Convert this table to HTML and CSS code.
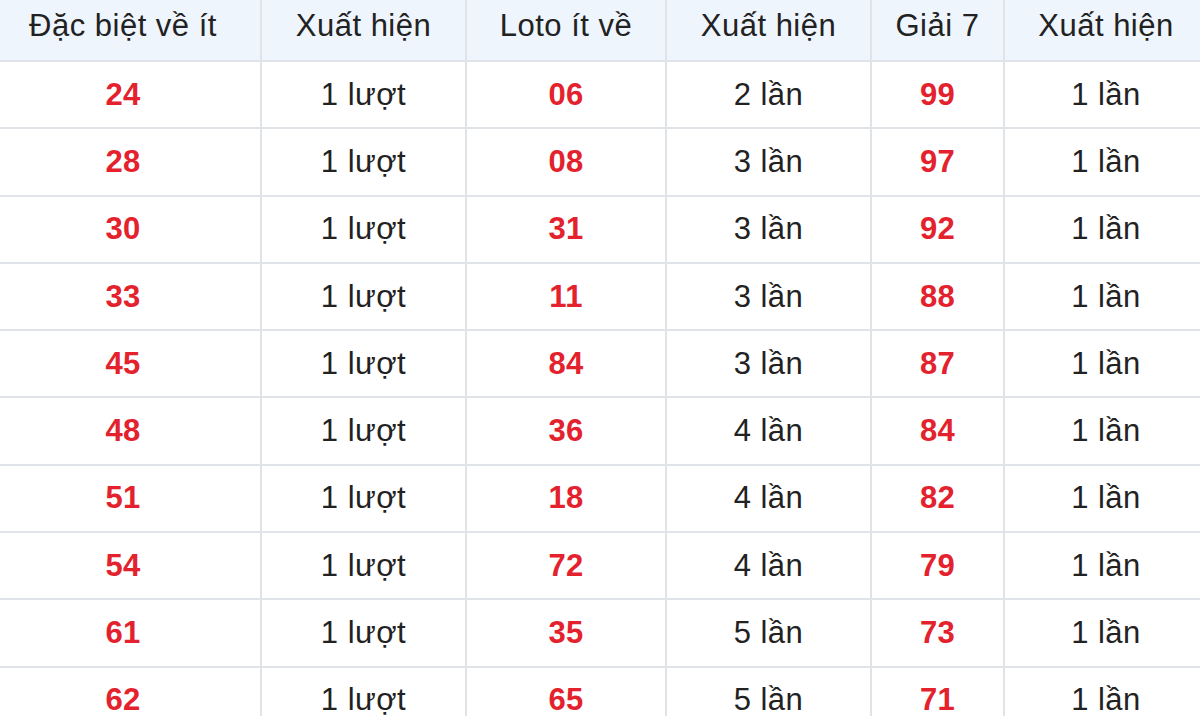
FILE: index.html
```html
<!DOCTYPE html>
<html lang="vi">
<head>
<meta charset="utf-8">
<link rel="stylesheet" href="styles.css">
</head>
<body>
<div class="wrap">
<table class="stats">
<colgroup>
<col class="c1"><col class="c2"><col class="c3"><col class="c4"><col class="c5"><col class="c6">
</colgroup>
<thead>
<tr><th>Đặc biệt về ít</th><th>Xuất hiện</th><th>Loto ít về</th><th>Xuất hiện</th><th>Giải 7</th><th>Xuất hiện</th></tr>
</thead>
<tbody>
<tr><td class="num">24</td><td>1 lượt</td><td class="num">06</td><td>2 lần</td><td class="num">99</td><td>1 lần</td></tr>
<tr><td class="num">28</td><td>1 lượt</td><td class="num">08</td><td>3 lần</td><td class="num">97</td><td>1 lần</td></tr>
<tr><td class="num">30</td><td>1 lượt</td><td class="num">31</td><td>3 lần</td><td class="num">92</td><td>1 lần</td></tr>
<tr><td class="num">33</td><td>1 lượt</td><td class="num">11</td><td>3 lần</td><td class="num">88</td><td>1 lần</td></tr>
<tr><td class="num">45</td><td>1 lượt</td><td class="num">84</td><td>3 lần</td><td class="num">87</td><td>1 lần</td></tr>
<tr><td class="num">48</td><td>1 lượt</td><td class="num">36</td><td>4 lần</td><td class="num">84</td><td>1 lần</td></tr>
<tr><td class="num">51</td><td>1 lượt</td><td class="num">18</td><td>4 lần</td><td class="num">82</td><td>1 lần</td></tr>
<tr><td class="num">54</td><td>1 lượt</td><td class="num">72</td><td>4 lần</td><td class="num">79</td><td>1 lần</td></tr>
<tr><td class="num">61</td><td>1 lượt</td><td class="num">35</td><td>5 lần</td><td class="num">73</td><td>1 lần</td></tr>
<tr><td class="num">62</td><td>1 lượt</td><td class="num">65</td><td>5 lần</td><td class="num">71</td><td>1 lần</td></tr>
</tbody>
</table>
</div>
</body>
</html>
```

FILE: styles.css
```css
html, body {
  margin: 0;
  padding: 0;
  background: #ffffff;
  overflow: hidden;
}
.wrap {
  width: 1200px;
  height: 716px;
  overflow: hidden;
}
.stats {
  border-collapse: collapse;
  table-layout: fixed;
  width: 1223px;
  margin-left: -16px;
  margin-top: -10px;
  font-family: "Liberation Sans", Arial, sans-serif;
  font-size: 31px;
  color: #222222;
}
.c1 { width: 276px; }
.c2 { width: 205px; }
.c3 { width: 200px; }
.c4 { width: 205px; }
.c5 { width: 133px; }
.c6 { width: 204px; }
.stats th,
.stats td {
  border: 2px solid #e0e3e7;
  text-align: center;
  vertical-align: middle;
  padding: 0;
  letter-spacing: 0.5px;
}
.stats th {
  background: #eef5fd;
  font-weight: normal;
  height: 68px;
}
.stats td {
  height: 65.3px;
}
.stats td.num {
  color: #e3222e;
  font-weight: bold;
  letter-spacing: 0.3px;
}
```
